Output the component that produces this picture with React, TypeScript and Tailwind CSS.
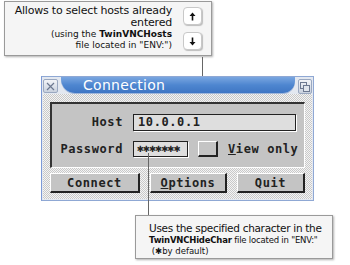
import React from 'react';

const mono = { fontFamily: '"DejaVu Sans Mono", "Liberation Mono", monospace' };
const sans = { fontFamily: 'Verdana, "DejaVu Sans", sans-serif' };

function ArrowKey({ dir }: { dir: 'up' | 'down' }) {
  return (
    <div className="flex h-[18px] w-[19px] items-center justify-center rounded-[4px] border border-[#c8c8c8] bg-white shadow-[1px_1px_1px_#bdbdbd]">
      <svg width="7" height="9" viewBox="0 0 7 9">
        {dir === 'up' ? (
          <path d="M3.5 0.5 L6.5 4 H4.3 V8.5 H2.7 V4 H0.5 Z" fill="#111" />
        ) : (
          <path d="M3.5 8.5 L6.5 5 H4.3 V0.5 H2.7 V5 H0.5 Z" fill="#111" />
        )}
      </svg>
    </div>
  );
}

function AmigaButton({ children, w }: { children: React.ReactNode; w: string }) {
  return (
    <div
      className={`${w} flex h-[20px] items-center justify-center border-t border-l border-t-white border-l-white border-b-2 border-r-2 border-b-[#222] border-r-[#222] bg-[#c4c4c4] text-[12px] font-bold tracking-[0.6px] text-[#222]`}
      style={mono}
    >
      {children}
    </div>
  );
}

export default function App() {
  return (
    <div className="relative h-[265px] w-[350px] overflow-hidden bg-white">
      {/* top callout */}
      <div className="absolute left-[4px] top-[1px] h-[55px] w-[208px] border border-[#9a9a9a] bg-[#f5f5f5] shadow-[1px_1px_2px_#b0b0b0]">
        <div className="flex">
          <div className="w-[167px] whitespace-nowrap pt-[3px] text-right text-[#111]" style={sans}>
            <div className="text-[11px] leading-[12px] tracking-[-0.2px]">Allows to select hosts already</div>
            <div className="text-[11px] leading-[11px] tracking-[-0.2px]">entered</div>
            <div className="mt-[1px] text-[9px] leading-[11px]">
              (using the <span className="font-bold">TwinVNCHosts</span>
            </div>
            <div className="text-[9px] leading-[11px]">file located in "ENV:")</div>
          </div>
          <div className="ml-[11px] flex flex-col gap-[7px] pt-[5px]">
            <ArrowKey dir="up" />
            <ArrowKey dir="down" />
          </div>
        </div>
      </div>
      <div className="absolute left-[202px] top-[57px] h-[67px] w-px bg-[#666]" />

      {/* window */}
      <div className="absolute left-[41px] top-[76px] flex h-[125px] w-[273px] flex-col border border-[#8fa8d4] border-l-[#7d9ad6] bg-[#e3e8f0]">
        {/* title bar */}
        <div className="flex h-[17px] items-start">
          <div className="ml-[1px] mt-[2px] flex h-[14px] w-[15px] items-center justify-center rounded-[2px] border border-[#9aa8c0] bg-gradient-to-b from-[#f2f4f8] to-[#c9d1de]">
            <svg width="9" height="9" viewBox="0 0 9 9">
              <path d="M1 1 L8 8 M8 1 L1 8" stroke="#6c7890" strokeWidth="1.2" />
            </svg>
          </div>
          <div className="ml-[3px] flex h-[16px] w-[234px] items-center rounded-bl-[14px] rounded-br-[12px] bg-gradient-to-b from-[#7aa6e0] via-[#4e86d0] to-[#3f76c4] pl-[22px] text-[14px] leading-none tracking-[0.3px] text-white shadow-[0_1px_0_#9fb6da]" style={sans}>
            Connection
          </div>
          <div className="ml-[3px] mt-[2px] flex h-[15px] w-[14px] items-center justify-center rounded-[2px] border border-[#9aa8c0] bg-gradient-to-b from-[#f2f4f8] to-[#c9d1de]">
            <svg width="10" height="10" viewBox="0 0 10 10">
              <rect x="0.5" y="0.5" width="6" height="6" fill="none" stroke="#6c7890" />
              <rect x="3.5" y="3.5" width="6" height="6" fill="#dfe4ec" stroke="#6c7890" />
            </svg>
          </div>
        </div>
        {/* body */}
        <div className="mx-[1px] mb-[1px] flex-1 bg-[repeating-conic-gradient(#c9c9c9_0_25%,#f4f4f4_0_50%)] bg-[length:2px_2px] px-[7px] pt-[8px]">
          <div className="h-[66px] border-t-2 border-l-2 border-t-[#333] border-l-[#333] border-b border-r border-b-white border-r-white bg-[#c4c4c4] pt-[9px] text-[12px] font-bold tracking-[0.6px] text-[#222]" style={mono}>
            <div className="flex items-center">
              <div className="w-[72px] pr-[1px] text-right">Host</div>
              <div className="ml-[9px] flex h-[17px] w-[163px] items-center border border-[#222] bg-[#dedede] pl-[4px] shadow-[1px_1px_0_#fff]">
                10.0.0.1
              </div>
            </div>
            <div className="mt-[9px] flex items-center">
              <div className="w-[72px] pr-[1px] text-right">Password</div>
              <div className="ml-[9px] flex h-[16px] w-[55px] items-center border border-[#222] bg-[#dedede] pl-[3px] text-[11px] tracking-[-0.5px] shadow-[1px_1px_0_#fff]">
                ✱✱✱✱✱✱✱
              </div>
              <div className="ml-[10px] h-[16px] w-[20px] border-t border-l border-t-white border-l-white border-b-2 border-r-2 border-b-[#222] border-r-[#222] bg-[#c4c4c4]" />
              <div className="ml-[10px]">
                <span className="underline">V</span>iew only
              </div>
            </div>
          </div>
          <div className="mt-[5px] flex gap-[10px]">
            <AmigaButton w="w-[90px]">Connect</AmigaButton>
            <AmigaButton w="w-[77px]">
              <span>
                <span className="underline">O</span>ptions
              </span>
            </AmigaButton>
            <AmigaButton w="w-[68px]">Quit</AmigaButton>
          </div>
        </div>
      </div>

      {/* bottom callout */}
      <div className="absolute left-[148px] top-[153px] h-[62px] w-px bg-[#666]" />
      <div className="absolute left-[135px] top-[215px] h-[44px] w-[198px] whitespace-nowrap border border-[#9a9a9a] bg-[#f5f5f5] pl-[13px] pt-[6px] text-[#111] shadow-[1px_1px_2px_#b0b0b0]" style={sans}>
        <div className="text-[10.5px] leading-[13px] tracking-[-0.3px]">Uses the specified character in the</div>
        <div className="text-[8.5px] leading-[11px] tracking-[-0.2px]">
          <span className="font-bold">TwinVNCHideChar</span> file located in "ENV:"
        </div>
        <div className="text-[8.5px] leading-[10px]">&nbsp;(✱by default)</div>
      </div>
    </div>
  );
}
